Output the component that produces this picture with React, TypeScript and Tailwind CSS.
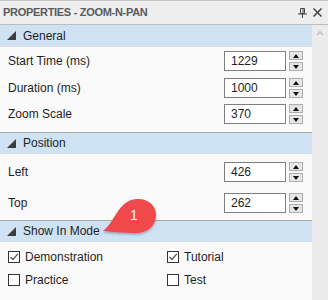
import React from 'react';

const font = { fontFamily: '"Liberation Sans", Arial, sans-serif' };

const HeaderGlyph = () => (
    <svg width="9" height="9" viewBox="0 0 9 9" className="shrink-0">
        <path d="M9 0 L9 9 L0 9 Z" fill="#3c3c3c" />
    </svg>
);

const SectionHeader: React.FC<{ title: string; top?: boolean }> = ({ title, top = true }) => (
    <div
        className={`h-[22px] bg-[#cee2f4] flex items-center pl-[7px] gap-[7px] border-b border-[#d4dce4] ${
            top ? 'border-t border-t-[#a9a9a9]' : ''
        }`}
    >
        <HeaderGlyph />
        <span className="text-[12px] text-[#1e1e1e] leading-none">{title}</span>
    </div>
);

const Spinner = () => (
    <div className="flex flex-col gap-[2px] ml-[3px]">
        <div className="w-[14px] h-[9px] bg-[#e5e5e5] border border-[#adadad] flex items-center justify-center">
            <svg width="6" height="4" viewBox="0 0 6 4">
                <path d="M3 0 L6 4 L0 4 Z" fill="#111" />
            </svg>
        </div>
        <div className="w-[14px] h-[9px] bg-[#e5e5e5] border border-[#adadad] flex items-center justify-center">
            <svg width="6" height="4" viewBox="0 0 6 4">
                <path d="M0 0 L6 0 L3 4 Z" fill="#111" />
            </svg>
        </div>
    </div>
);

const NumberRow: React.FC<{ label: string; value: string; className?: string }> = ({ label, value, className = '' }) => (
    <div className={`flex items-center h-[20px] pl-[8px] pr-[9px] ${className}`}>
        <span className="flex-1 text-[12px] text-[#1e1e1e]">{label}</span>
        <div className="w-[62px] h-[20px] border border-[#7f7f7f] bg-white flex items-center pl-[6px] text-[12px] text-[#1e1e1e]">
            {value}
        </div>
        <Spinner />
    </div>
);

const Check: React.FC<{ label: string; checked?: boolean }> = ({ label, checked }) => (
    <div className="flex items-center gap-[5px] h-[16px]">
        <div className="w-[12px] h-[12px] border border-[#333] bg-white flex items-center justify-center">
            {checked && (
                <svg width="10" height="10" viewBox="0 0 10 10">
                    <path d="M1.5 5 L4 7.5 L8.8 1.8" stroke="#555" strokeWidth="1.3" fill="none" />
                </svg>
            )}
        </div>
        <span className="text-[12px] text-[#1e1e1e] leading-none">{label}</span>
    </div>
);

export default function App() {
    return (
        <div className="relative w-[328px] h-[300px] overflow-hidden bg-[#fafafa] border-t border-[#c4c4c4]" style={font}>
            {/* title bar */}
            <div className="h-[23px] bg-[#eeeeee] flex items-center pl-[3px] pr-[6px]">
                <span className="flex-1 text-[11px] font-bold tracking-[-0.3px] text-[#5a5a5a]">PROPERTIES - ZOOM-N-PAN</span>
                <svg width="9" height="10" viewBox="0 0 9 10" className="mr-[6px]">
                    <path d="M2.5 0.5 H6.5 V5.5 H2.5 Z" stroke="#444" fill="none" />
                    <path d="M5 1 V5" stroke="#444" />
                    <path d="M0 6 H9" stroke="#444" />
                    <path d="M4.5 6 V10" stroke="#444" />
                </svg>
                <svg width="9" height="9" viewBox="0 0 9 9">
                    <path d="M0.5 0.5 L8.5 8.5 M8.5 0.5 L0.5 8.5" stroke="#444" strokeWidth="1.5" />
                </svg>
            </div>

            <div className="flex border-t border-[#bdbdbd]">
                <div className="w-[312px] h-[276px]">
                    <SectionHeader title="General" top={false} />
                    <NumberRow label="Start Time (ms)" value="1229" className="mt-[4px]" />
                    <NumberRow label="Duration (ms)" value="1000" className="mt-[7px]" />
                    <NumberRow label="Zoom Scale" value="370" className="mt-[6px]" />

                    <div className="mt-[8px]">
                        <SectionHeader title="Position" />
                    </div>
                    <NumberRow label="Left" value="426" className="mt-[8px]" />
                    <NumberRow label="Top" value="262" className="mt-[11px]" />

                    <div className="mt-[7px]">
                        <SectionHeader title="Show In Mode" />
                    </div>
                    <div className="grid grid-cols-[159px_1fr] pl-[8px] mt-[7px] gap-y-[7px]">
                        <Check label="Demonstration" checked />
                        <Check label="Tutorial" checked />
                        <Check label="Practice" />
                        <Check label="Test" />
                    </div>
                </div>

                {/* scrollbar */}
                <div className="w-[16px] h-[276px] bg-[#ebebeb] flex justify-center pt-[5px]">
                    <svg width="8" height="6" viewBox="0 0 8 6">
                        <path d="M1 5 L4 2 L7 5" stroke="#c2c2c2" strokeWidth="1.6" fill="none" />
                    </svg>
                </div>
            </div>

            {/* callout */}
            <svg width="66" height="46" viewBox="0 0 66 46" className="absolute left-[96px] top-[194px]">
                <defs>
                    <filter id="sh" x="-20%" y="-20%" width="140%" height="160%">
                        <feDropShadow dx="0" dy="1.5" stdDeviation="1.2" floodColor="#000" floodOpacity="0.3" />
                    </filter>
                </defs>
                <path
                    d="M7 36 C19 28, 22 4, 42 4 C54 4, 60 12, 60 20 C60 31, 51 38, 40 38 C29 38, 16 37, 7 36 Z"
                    fill="#f0484b"
                    filter="url(#sh)"
                />
                <text x="38" y="25" textAnchor="middle" fill="#fff" fontSize="14" fontFamily='"Liberation Sans", Arial, sans-serif'>
                    1
                </text>
            </svg>
        </div>
    );
}
